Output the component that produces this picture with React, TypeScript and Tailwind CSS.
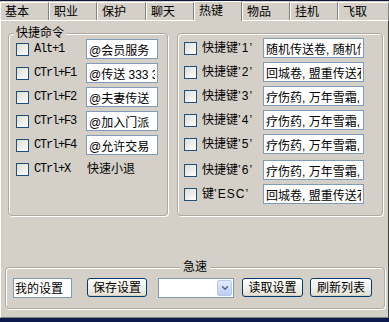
import { ChevronDown } from "lucide-react";

const tabs = ["基本", "职业", "保护", "聊天", "热键", "物品", "挂机", "飞取"];
const tabWidths = ["w-[49px]", "w-[48px]", "w-[49px]", "w-[48px]", "w-[48px]", "w-[48px]", "w-[48px]", "w-[51px]"];

const leftRows: [string, string | null][] = [
  ["Alt+1", "@会员服务"],
  ["CTrl+F1", "@传送 333 333"],
  ["CTrl+F2", "@夫妻传送"],
  ["CTrl+F3", "@加入门派"],
  ["CTrl+F4", "@允许交易"],
  ["CTrl+X", null],
];

const rightRows = [
  ["快捷键", "1", "随机传送卷, 随机传送卷"],
  ["快捷键", "2", "回城卷, 盟重传送石"],
  ["快捷键", "3", "疗伤药, 万年雪霜, 金创药"],
  ["快捷键", "4", "疗伤药, 万年雪霜, 金创药"],
  ["快捷键", "5", "疗伤药, 万年雪霜, 金创药"],
  ["快捷键", "6", "疗伤药, 万年雪霜, 金创药"],
  ["键", "ESC", "回城卷, 盟重传送石"],
];

const styles = {
  input:
    "h-[20px] border border-[#7f9db9] bg-white px-[2px] text-[12px] text-black outline-none font-['Liberation_Sans','Noto_Sans_CJK_SC',sans-serif]",
  group:
    "relative rounded-[4px] border border-[#aeaaa2] shadow-[inset_1px_1px_0_#fff,1px_1px_0_#fff]",
  button:
    "h-[19px] rounded-[3px] border border-[#003c74] bg-linear-to-b from-white to-[#e3e0d4] text-[12px] leading-none text-black shadow-[inset_0_-1px_0_#d6d0c0]",
  mono: "font-['Liberation_Mono',monospace] text-[12px] tracking-[-1.2px] text-black",
};

function Check() {
  return (
    <span className="inline-block h-[13px] w-[13px] shrink-0 border border-[#1c5180] bg-linear-to-br from-[#dcdcd7] to-white" />
  );
}

export default function App() {
  return (
    <div className="flex h-[322px] w-[389px] flex-col overflow-hidden bg-[#d4d0c8] font-['Liberation_Sans','Noto_Sans_CJK_SC',sans-serif] text-[12px] text-black">
      <div className="h-px bg-[#10183a]" />

      {/* TABS */}
      <div className="relative z-10 flex h-[19px] items-end">
        {tabs.map((t, i) =>
          i === 4 ? (
            <div
              key={t}
              className={`${tabWidths[i]} -mb-px h-[20px] shrink-0 border-l border-t border-r border-white border-r-[#808080] bg-[#d4d0c8] pl-[4px] pt-[2px] leading-[14px]`}
            >
              {t}
            </div>
          ) : (
            <div
              key={t}
              className={`${tabWidths[i]} h-[18px] shrink-0 border-l border-t border-r border-white border-r-[#808080] pl-[4px] pt-[2px] leading-[14px]`}
            >
              {t}
            </div>
          )
        )}
      </div>

      {/* PAGE */}
      <div className="flex flex-1 flex-col border-b border-l border-r border-t border-white border-b-[#808080] border-r-[#404040] pt-[12px]">
        <div className="flex">
          {/* 快捷命令 */}
          <div className={`${styles.group} ml-[7px] h-[183px] w-[160px] pl-[7px] pt-[3px]`}>
            <span className="absolute left-[5px] top-[-9px] bg-[#d4d0c8] px-[2px] leading-[16px]">
              快捷命令
            </span>
            {leftRows.map(([key, val]) => (
              <div key={key} className="flex h-[24px] items-center">
                <Check />
                <span className={`${styles.mono} ml-[5px] w-[52px]`}>{key}</span>
                {val ? (
                  <input readOnly value={val} className={`${styles.input} w-[72px]`} />
                ) : (
                  <span className="pl-[1px]">快速小退</span>
                )}
              </div>
            ))}
          </div>

          {/* 快捷键 */}
          <div className={`${styles.group} ml-[9px] flex h-[183px] w-[206px] flex-col gap-[4px] pl-[6px] pt-[4px]`}>
            {rightRows.map(([name, key, val], i) => (
              <div key={key} className={`flex h-[20px] items-center ${i === 5 ? "mt-[2px]" : ""}`}>
                <Check />
                <span className="ml-[5px] w-[61px] whitespace-nowrap">
                  {name}
                  <span className="tracking-[1px]">’{key}’</span>
                </span>
                <input readOnly value={val} className={`${styles.input} w-[101px]`} />
              </div>
            ))}
          </div>
        </div>

        {/* 急速 */}
        <div className={`${styles.group} ml-[4px] mt-[51px] flex h-[42px] w-[380px] items-center pb-[1px] pl-[7px]`}>
          <span className="absolute left-1/2 top-[-9px] -translate-x-1/2 bg-[#d4d0c8] px-[3px] leading-[16px]">
            急速
          </span>
          <input readOnly value="我的设置" className={`${styles.input} w-[59px] px-px`} />
          <button className={`${styles.button} ml-[15px] w-[60px]`}>保存设置</button>
          <div className="ml-[11px] flex h-[20px] w-[76px] justify-end border border-[#7f9db9] bg-white p-px">
            <div className="flex w-[15px] items-center justify-center rounded-[2px] border border-[#b7c8ee] bg-linear-to-b from-[#e4ecfd] to-[#bccdf4]">
              <ChevronDown size={10} strokeWidth={3} className="text-[#4d6185]" />
            </div>
          </div>
          <button className={`${styles.button} ml-[8px] w-[61px]`}>读取设置</button>
          <button className={`${styles.button} ml-[7px] w-[62px]`}>刷新列表</button>
        </div>
      </div>

      <div className="h-[4px] bg-[#0c1a4c]" />
    </div>
  );
}
